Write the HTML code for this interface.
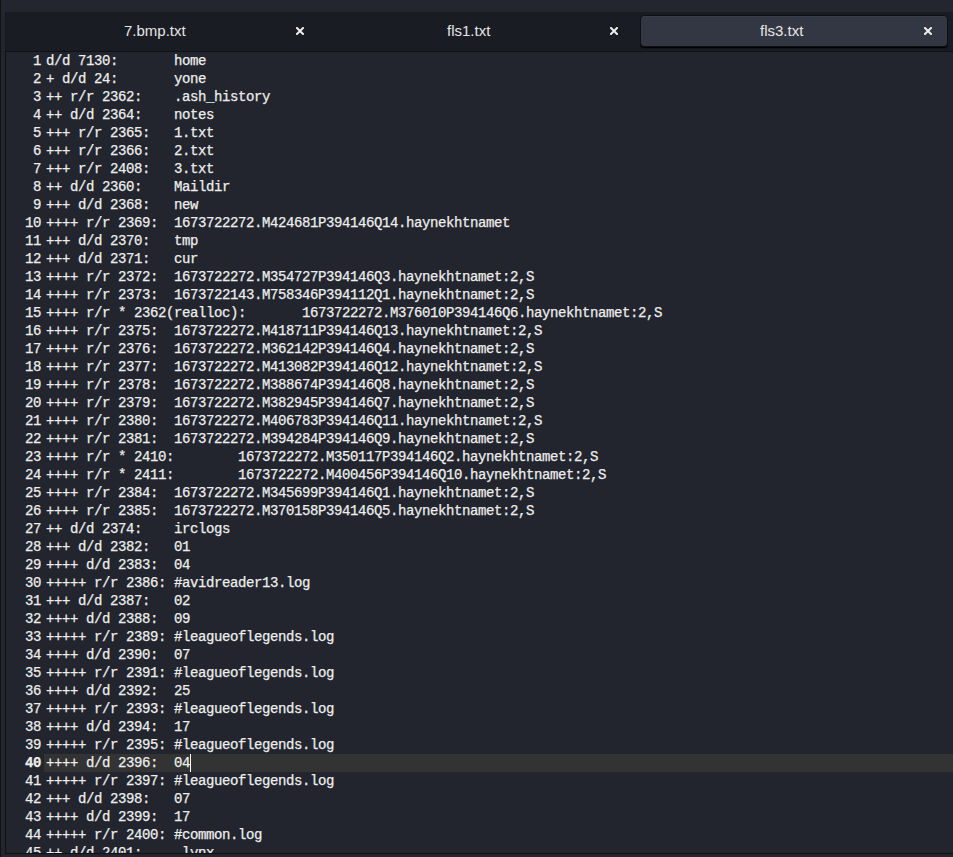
<!DOCTYPE html>
<html><head><meta charset="utf-8">
<style>
html,body{margin:0;padding:0;}
body{width:953px;height:857px;overflow:hidden;position:relative;background:#23262e;font-family:"Liberation Sans",sans-serif;}
#lstrip{position:absolute;left:0;top:0;width:1px;height:857px;background:#111216;}
#tabbar{position:absolute;left:5px;top:12px;width:960px;height:39px;background:#1a1c23;border-top:1px solid #1a1b21;border-left:1px solid #17191d;box-shadow:0 -1px 0 #25272f;}
.tab{position:absolute;top:15px;height:30px;width:306px;}
.tab.active{background:#333643;border:1px solid #0e0f12;border-radius:4px;box-shadow:0 1px 0 #030405,0 2px 0 rgba(0,0,0,0.25),inset 0 1px 0 rgba(255,255,255,0.04);}
.title{position:absolute;top:22px;font-size:15px;color:#e6e6e6;white-space:pre;line-height:18px;}
.close{position:absolute;top:27px;width:8px;height:8px;}
#editor{position:absolute;left:5px;top:51px;width:960px;height:801px;background:#22252d;border:1px solid #101114;overflow:hidden;}
#gutter{position:absolute;left:0;top:0;width:35px;text-align:right;}
#text{position:absolute;left:40px;top:0;}
.ln,.tl{height:18px;line-height:18px;font-family:"Liberation Mono",monospace;font-size:14px;letter-spacing:-0.4px;color:#eeeeee;white-space:pre;tab-size:8;-webkit-text-stroke:0.25px #eeeeee;-moz-tab-size:8;}
#curline{position:absolute;left:38px;top:702px;width:930px;height:18px;background:#333333;}
#cursor{position:absolute;left:184px;top:702px;width:1px;height:18px;background:#ffffff;}
</style></head>
<body>
<div id="lstrip"></div>
<div id="tabbar"></div>
<div class="tab active" style="left:640px"></div>
<div class="title" id="t1" style="left:124px">7.bmp.txt</div>
<div class="title" id="t2" style="left:447px">fls1.txt</div>
<div class="title" id="t3" style="left:760px">fls3.txt</div>
<svg class="close" style="left:296px" viewBox="0 0 8 8"><path d="M1 1L7 7M7 1L1 7" stroke="#eeeeee" stroke-width="2" stroke-linecap="square"/></svg>
<svg class="close" style="left:610px" viewBox="0 0 8 8"><path d="M1 1L7 7M7 1L1 7" stroke="#eeeeee" stroke-width="2" stroke-linecap="square"/></svg>
<svg class="close" style="left:924px" viewBox="0 0 8 8"><path d="M1 1L7 7M7 1L1 7" stroke="#eeeeee" stroke-width="2" stroke-linecap="square"/></svg>
<div id="editor">
<div id="curline"></div>
<div id="gutter">
<div class="ln">1</div><div class="ln">2</div><div class="ln">3</div><div class="ln">4</div><div class="ln">5</div><div class="ln">6</div><div class="ln">7</div><div class="ln">8</div><div class="ln">9</div><div class="ln">10</div><div class="ln">11</div><div class="ln">12</div><div class="ln">13</div><div class="ln">14</div><div class="ln">15</div><div class="ln">16</div><div class="ln">17</div><div class="ln">18</div><div class="ln">19</div><div class="ln">20</div><div class="ln">21</div><div class="ln">22</div><div class="ln">23</div><div class="ln">24</div><div class="ln">25</div><div class="ln">26</div><div class="ln">27</div><div class="ln">28</div><div class="ln">29</div><div class="ln">30</div><div class="ln">31</div><div class="ln">32</div><div class="ln">33</div><div class="ln">34</div><div class="ln">35</div><div class="ln">36</div><div class="ln">37</div><div class="ln">38</div><div class="ln">39</div><div class="ln" style="font-weight:bold">40</div><div class="ln">41</div><div class="ln">42</div><div class="ln">43</div><div class="ln">44</div><div class="ln">45</div>
</div>
<div id="text">
<div class="tl">d/d 7130:	home</div>
<div class="tl">+ d/d 24:	yone</div>
<div class="tl">++ r/r 2362:	.ash_history</div>
<div class="tl">++ d/d 2364:	notes</div>
<div class="tl">+++ r/r 2365:	1.txt</div>
<div class="tl">+++ r/r 2366:	2.txt</div>
<div class="tl">+++ r/r 2408:	3.txt</div>
<div class="tl">++ d/d 2360:	Maildir</div>
<div class="tl">+++ d/d 2368:	new</div>
<div class="tl">++++ r/r 2369:	1673722272.M424681P394146Q14.haynekhtnamet</div>
<div class="tl">+++ d/d 2370:	tmp</div>
<div class="tl">+++ d/d 2371:	cur</div>
<div class="tl">++++ r/r 2372:	1673722272.M354727P394146Q3.haynekhtnamet:2,S</div>
<div class="tl">++++ r/r 2373:	1673722143.M758346P394112Q1.haynekhtnamet:2,S</div>
<div class="tl">++++ r/r * 2362(realloc):	1673722272.M376010P394146Q6.haynekhtnamet:2,S</div>
<div class="tl">++++ r/r 2375:	1673722272.M418711P394146Q13.haynekhtnamet:2,S</div>
<div class="tl">++++ r/r 2376:	1673722272.M362142P394146Q4.haynekhtnamet:2,S</div>
<div class="tl">++++ r/r 2377:	1673722272.M413082P394146Q12.haynekhtnamet:2,S</div>
<div class="tl">++++ r/r 2378:	1673722272.M388674P394146Q8.haynekhtnamet:2,S</div>
<div class="tl">++++ r/r 2379:	1673722272.M382945P394146Q7.haynekhtnamet:2,S</div>
<div class="tl">++++ r/r 2380:	1673722272.M406783P394146Q11.haynekhtnamet:2,S</div>
<div class="tl">++++ r/r 2381:	1673722272.M394284P394146Q9.haynekhtnamet:2,S</div>
<div class="tl">++++ r/r * 2410:	1673722272.M350117P394146Q2.haynekhtnamet:2,S</div>
<div class="tl">++++ r/r * 2411:	1673722272.M400456P394146Q10.haynekhtnamet:2,S</div>
<div class="tl">++++ r/r 2384:	1673722272.M345699P394146Q1.haynekhtnamet:2,S</div>
<div class="tl">++++ r/r 2385:	1673722272.M370158P394146Q5.haynekhtnamet:2,S</div>
<div class="tl">++ d/d 2374:	irclogs</div>
<div class="tl">+++ d/d 2382:	01</div>
<div class="tl">++++ d/d 2383:	04</div>
<div class="tl">+++++ r/r 2386:	#avidreader13.log</div>
<div class="tl">+++ d/d 2387:	02</div>
<div class="tl">++++ d/d 2388:	09</div>
<div class="tl">+++++ r/r 2389:	#leagueoflegends.log</div>
<div class="tl">++++ d/d 2390:	07</div>
<div class="tl">+++++ r/r 2391:	#leagueoflegends.log</div>
<div class="tl">++++ d/d 2392:	25</div>
<div class="tl">+++++ r/r 2393:	#leagueoflegends.log</div>
<div class="tl">++++ d/d 2394:	17</div>
<div class="tl">+++++ r/r 2395:	#leagueoflegends.log</div>
<div class="tl">++++ d/d 2396:	04</div>
<div class="tl">+++++ r/r 2397:	#leagueoflegends.log</div>
<div class="tl">+++ d/d 2398:	07</div>
<div class="tl">++++ d/d 2399:	17</div>
<div class="tl">+++++ r/r 2400:	#common.log</div>
<div class="tl">++ d/d 2401:	.lynx</div>
</div>
<div id="cursor"></div>
</div>
</body></html>
